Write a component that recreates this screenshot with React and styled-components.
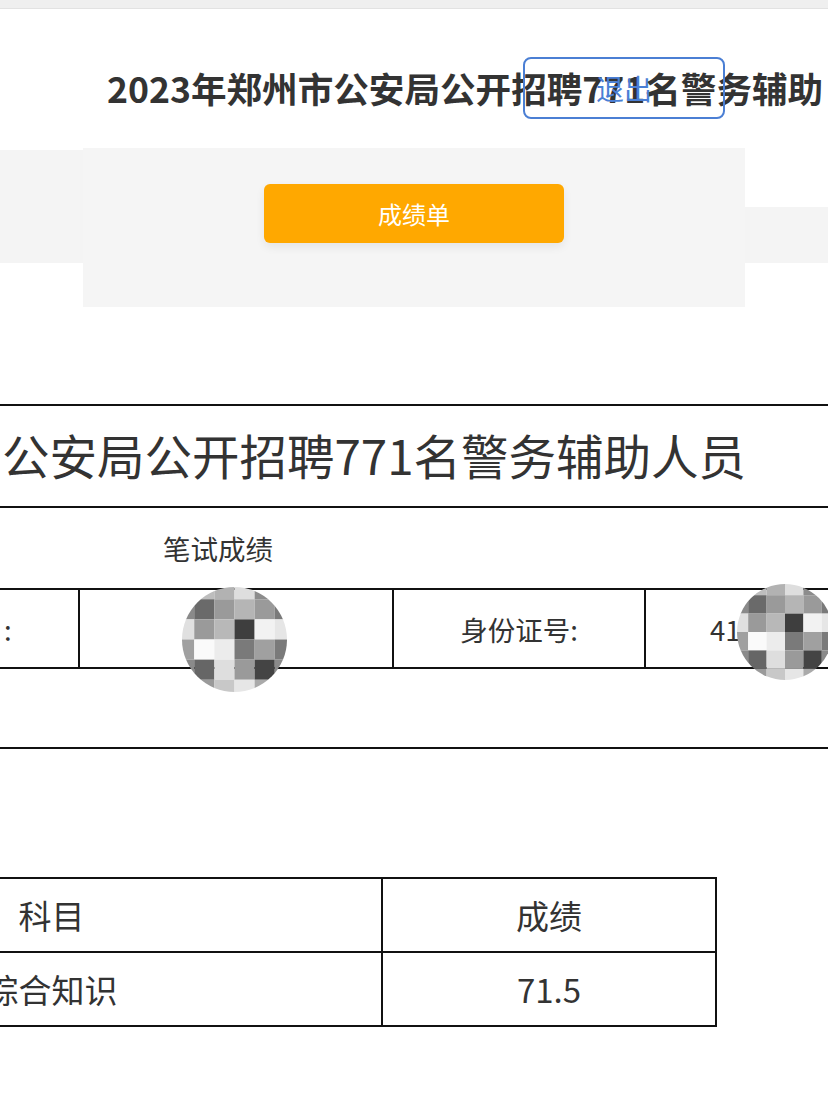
import React from "react"
import styled, { createGlobalStyle } from "styled-components"

const GlobalStyle = createGlobalStyle`
  html, body {
    margin: 0;
    padding: 0;
    background: #ffffff;
  }
  body {
    font-family: "Noto Sans CJK SC", "Noto Sans", "Liberation Sans", sans-serif;
    color: #333333;
    overflow-x: hidden;
  }
`

const Page = styled.div`
  width: 828px;
  min-height: 1104px;
  overflow: hidden;
  background: #ffffff;
`

const TopStrip = styled.div`
  height: 8px;
  background: #efefef;
  border-bottom: 1px solid #e2e2e2;
`

const Header = styled.header`
  position: relative;
  height: 139px;
`

const Title = styled.h1`
  margin: 0;
  padding: 54px 0 0 107px;
  line-height: 50px;
  font-size: 35.6px;
  font-weight: 700;
  color: #333333;
  white-space: nowrap;
  overflow: hidden;
`

const ExitButton = styled.button`
  position: absolute;
  left: 523px;
  top: 48px;
  width: 202px;
  height: 62px;
  box-sizing: border-box;
  border: 2px solid #4b7fd4;
  border-radius: 8px;
  background: transparent;
  color: #4a7fd5;
  font-family: inherit;
  font-size: 28px;
  display: flex;
  align-items: center;
  justify-content: center;
  padding: 0;
`

const Band = styled.div`
  display: flex;
  height: 159px;
`

const SideStrip = styled.div`
  flex: 1 0 0;
  align-self: flex-start;
  margin-top: ${(p) => p.$top}px;
  height: ${(p) => p.$h}px;
  background: #f4f4f4;
`

const Panel = styled.div`
  flex: 0 0 662px;
  background: #f5f5f5;
  display: flex;
  justify-content: center;
  align-items: flex-start;
  padding-top: 36px;
  box-sizing: border-box;
`

const OrangeButton = styled.button`
  width: 300px;
  height: 59px;
  border: none;
  border-radius: 6px;
  background: #ffa800;
  color: #ffffff;
  font-family: inherit;
  font-size: 24px;
  box-shadow: 0 4px 10px rgba(0, 0, 0, 0.07);
`

const InfoSection = styled.section`
  position: relative;
  margin-top: 97px;
  border-top: 2px solid #111111;
`

const Row = styled.div`
  height: ${(p) => p.$h}px;
  border-bottom: 2px solid #111111;
  display: flex;
  align-items: center;
  white-space: nowrap;
  overflow: hidden;
`

const BigText = styled.div`
  padding: 0 0 4px 2px;
  font-size: 47.5px;
  color: #333333;
`

const SubHead = styled.div`
  padding-left: 163px;
  font-size: 27.5px;
  color: #333333;
`

const InfoGrid = styled.div`
  display: grid;
  grid-template-columns: 80px 314px 252px 1fr;
  height: 77px;
  border-bottom: 2px solid #111111;
`

const InfoCell = styled.div`
  display: flex;
  align-items: center;
  justify-content: ${(p) => p.$align || "center"};
  padding-left: ${(p) => p.$pad || 0}px;
  font-size: 27.5px;
  color: #333333;
  white-space: nowrap;
  overflow: hidden;
  border-right: ${(p) => (p.$last ? "none" : "2px solid #111111")};
`

const MosaicWrap = styled.div`
  position: absolute;
  left: ${(p) => p.$x}px;
  top: ${(p) => p.$y}px;
  width: ${(p) => p.$size}px;
  height: ${(p) => p.$size}px;
  pointer-events: none;
`

const ScoreTable = styled.div`
  margin: 128px 0 0 -280px;
  width: 997px;
  box-sizing: border-box;
  border: 2px solid #111111;
  border-bottom: none;
`

const ScoreRow = styled.div`
  display: grid;
  grid-template-columns: 659px 1fr;
  height: ${(p) => p.$h}px;
  border-bottom: 2px solid #111111;
`

const ScoreCell = styled.div`
  display: flex;
  align-items: center;
  justify-content: center;
  font-size: 33px;
  color: #333333;
  white-space: nowrap;

  & + & {
    border-left: 2px solid #111111;
  }
`

const mosaic = [
  ["#cfcfcf", "#bdbdbd", "#b2b2b2", "#dedede", "#8c8c8c", "#9a9a9a"],
  ["#8a8a8a", "#6a6a6a", "#9a9a9a", "#b5b5b5", "#9a9a9a", "#7a7a7a"],
  ["#e0e0e0", "#9a9a9a", "#b8b8b8", "#3e3e3e", "#f2f2f2", "#e6e6e6"],
  ["#a0a0a0", "#fafafa", "#ececec", "#7a7a7a", "#a0a0a0", "#7a7a7a"],
  ["#8a8a8a", "#666666", "#dedede", "#9a9a9a", "#444444", "#8a8a8a"],
  ["#aaaaaa", "#9a9a9a", "#c8c8c8", "#e6e6e6", "#aaaaaa", "#9a9a9a"],
]

const Mosaic = ({ id, x, y, size }) => (
  <MosaicWrap $x={x} $y={y} $size={size}>
    <svg width={size} height={size} viewBox="0 0 120 120">
      <defs>
        <clipPath id={id}>
          <circle cx="60" cy="60" r="60" />
        </clipPath>
      </defs>
      <g clipPath={`url(#${id})`}>
        {mosaic.map((row, r) =>
          row.map((c, i) => (
            <rect key={`${r}-${i}`} x={i * 23 - 9} y={r * 23 - 9} width="23" height="23" fill={c} />
          ))
        )}
      </g>
    </svg>
  </MosaicWrap>
)

const App = () => {
  return (
    <Page>
      <GlobalStyle />
      <TopStrip />
      <Header>
        <Title>2023年郑州市公安局公开招聘771名警务辅助</Title>
        <ExitButton>退出</ExitButton>
      </Header>

      <Band>
        <SideStrip $top={2} $h={113} />
        <Panel>
          <OrangeButton>成绩单</OrangeButton>
        </Panel>
        <SideStrip $top={59} $h={56} />
      </Band>

      <InfoSection>
        <Row $h={100}>
          <BigText>公安局公开招聘771名警务辅助人员</BigText>
        </Row>
        <Row $h={80}>
          <SubHead>笔试成绩</SubHead>
        </Row>
        <InfoGrid>
          <InfoCell $align="flex-start" $pad={4}>:</InfoCell>
          <InfoCell />
          <InfoCell>身份证号:</InfoCell>
          <InfoCell $align="flex-start" $pad={64} $last>41</InfoCell>
        </InfoGrid>
        <Row $h={78} />
        <Mosaic id="m1" x={182} y={181} size={105} />
        <Mosaic id="m2" x={737} y={178} size={96} />
      </InfoSection>

      <ScoreTable>
        <ScoreRow $h={72}>
          <ScoreCell>科目</ScoreCell>
          <ScoreCell>成绩</ScoreCell>
        </ScoreRow>
        <ScoreRow $h={72}>
          <ScoreCell>综合知识</ScoreCell>
          <ScoreCell>71.5</ScoreCell>
        </ScoreRow>
      </ScoreTable>
    </Page>
  )
}

export default App
